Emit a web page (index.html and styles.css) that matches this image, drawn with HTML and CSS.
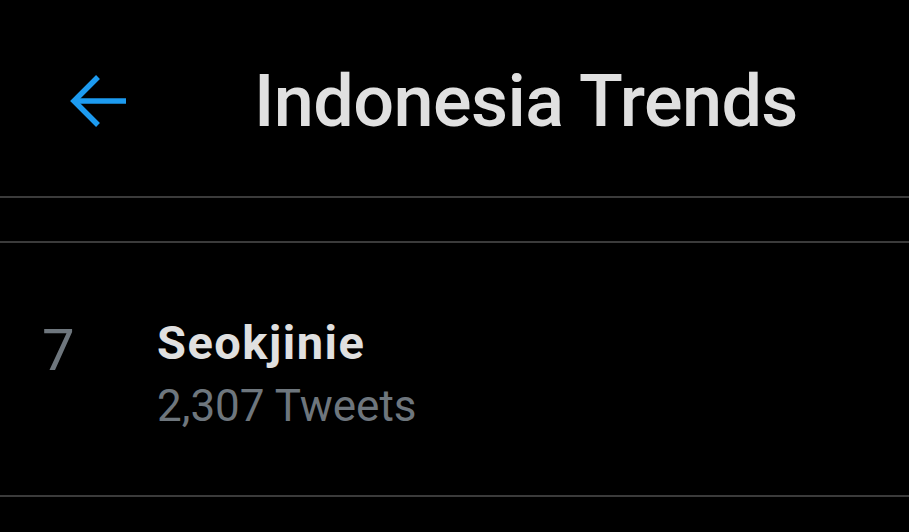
FILE: index.html
```html
<!DOCTYPE html>
<html>
<head>
<meta charset="utf-8">
<link rel="stylesheet" href="styles.css">
</head>
<body>
<div class="page">
  <header class="header">
    <div class="back">
      <svg width="58" height="56" viewBox="0 0 58 56" fill="none" stroke="#1d9bf0" stroke-width="5.5" stroke-linecap="butt" stroke-linejoin="miter">
        <path d="M4 28 H56"/>
        <path d="M28 4 L4 28 L28 52"/>
      </svg>
    </div>
    <h1 class="title">Indonesia Trends</h1>
  </header>
  <div class="spacer"></div>
  <div class="trend">
    <div class="rank">7</div>
    <div class="info">
      <div class="name">Seokjinie</div>
      <div class="count">2,307 Tweets</div>
    </div>
  </div>
  <div class="rest"></div>
</div>
</body>
</html>
```
FILE: styles.css
```css
html, body {
  margin: 0;
  padding: 0;
  background: #000;
}
.page {
  width: 909px;
  height: 532px;
  overflow: hidden;
  font-family: Roboto, "Noto Sans", sans-serif;
  background: #000;
}
.header {
  height: 196px;
  border-bottom: 2px solid #3b3b3b;
  display: flex;
  align-items: center;
}
.back {
  width: 58px;
  height: 56px;
  margin-left: 70px;
  margin-top: 6px;
}
.back svg { display: block; }
.title {
  margin: 8px 0 0 126px;
  font-size: 72px;
  font-weight: 500;
  letter-spacing: -0.6px;
  color: #e0e0e0;
  line-height: 1;
}
.spacer {
  height: 43px;
  border-bottom: 2px solid #3b3b3b;
}
.trend {
  height: 252px;
  border-bottom: 2px solid #3b3b3b;
  display: flex;
  align-items: flex-start;
}
.rank {
  width: 157px;
  padding-left: 42px;
  box-sizing: border-box;
  font-size: 58px;
  color: #6e767d;
  line-height: 1;
  margin-top: 78px;
}
.info {
  display: flex;
  flex-direction: column;
  margin-top: 76px;
}
.name {
  font-size: 47px;
  font-weight: 700;
  letter-spacing: 1.5px;
  color: #e0e0e0;
  line-height: 1;
}
.count {
  font-size: 44px;
  color: #6e767d;
  line-height: 1;
  margin-top: 18px;
}
```
